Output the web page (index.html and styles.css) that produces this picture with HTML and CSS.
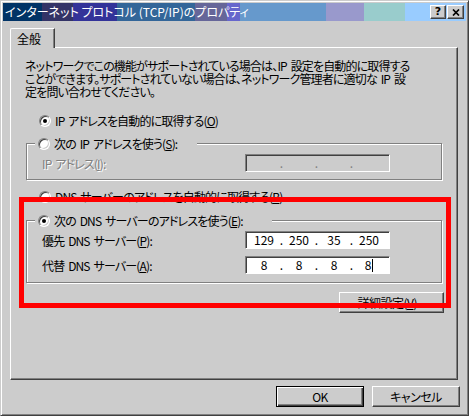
FILE: index.html
```html
<!DOCTYPE html>
<html lang="ja">
  <head>
    <meta charset="UTF-8" />
    <meta name="viewport" content="width=device-width, initial-scale=1.0" />
    <title>インターネット プロトコル (TCP/IP)のプロパティ</title>
    <link rel="stylesheet" href="styles.css">
  </head>
  <body>
    <div class="window">
      <div class="titlebar">
        <span class="title">インターネット プロトコル (TCP/IP)のプロパティ</span>
        <div class="title-buttons">
          <button class="tb-btn help">?</button>
          <button class="tb-btn close">
            <svg width="8" height="7" viewBox="0 0 8 7">
              <path d="M1 0.5 L7 6.5 M7 0.5 L1 6.5" stroke="#000" stroke-width="1.7" fill="none" />
            </svg>
          </button>
        </div>
      </div>
      <div class="dialog">
        <div class="tabs">
          <div class="tab active">全般</div>
        </div>
        <div class="panel">
          <p class="intro">ネットワークでこの機能がサポートされている場合は、IP 設定を自動的に取得する<br>ことができます。サポートされていない場合は、ネットワーク管理者に適切な IP 設<br>定を問い合わせてください。</p>

          <div class="radio-row first"><span class="radio checked"></span>IP アドレスを自動的に取得する(<u>O</u>)</div>

          <div class="group ip-group">
            <div class="group-title"><span class="radio"></span>次の IP アドレスを使う(<u>S</u>):</div>
            <div class="field-row">
              <span class="field-label disabled">IP アドレス(<u>I</u>):</span>
              <div class="ip-field disabled">
                <span class="octet"></span><span class="dot">.</span>
                <span class="octet"></span><span class="dot">.</span>
                <span class="octet"></span><span class="dot">.</span>
                <span class="octet"></span>
              </div>
            </div>
          </div>

          <div class="radio-row"><span class="radio"></span>DNS サーバーのアドレスを自動的に取得する(<u>B</u>)</div>

          <div class="group dns-group">
            <div class="group-title"><span class="radio checked"></span>次の DNS サーバーのアドレスを使う(<u>E</u>):</div>
            <div class="field-row">
              <span class="field-label">優先 DNS サーバー(<u>P</u>):</span>
              <div class="ip-field">
                <span class="octet">129</span><span class="dot">.</span>
                <span class="octet">250</span><span class="dot">.</span>
                <span class="octet">35</span><span class="dot">.</span>
                <span class="octet">250</span>
              </div>
            </div>
            <div class="field-row second">
              <span class="field-label">代替 DNS サーバー(<u>A</u>):</span>
              <div class="ip-field">
                <span class="octet">8</span><span class="dot">.</span>
                <span class="octet">8</span><span class="dot">.</span>
                <span class="octet">8</span><span class="dot">.</span>
                <span class="octet">8<span class="caret"></span></span>
              </div>
            </div>
          </div>

          <div class="panel-actions">
            <button class="btn detail">詳細設定(<u>V</u>)...</button>
          </div>
        </div>
        <div class="dialog-actions">
          <button class="btn default">OK</button>
          <button class="btn">キャンセル</button>
        </div>
      </div>
      <!-- red annotation frame -->
      <div class="highlight"></div>
    </div>
  </body>
</html>
```

FILE: styles.css
```css
body {
  margin: 0;
  background: #cccccc;
  font-family: "Noto Sans CJK JP", "Noto Sans", sans-serif;
  font-size: 12px;
  font-feature-settings: "palt";
  color: #000;
}

.window {
  position: relative;
  width: 469px;
  height: 416px;
  box-sizing: border-box;
  padding: 2px;
  background: #cccccc;
  border: 1px solid;
  border-color: #cccccc #404040 #404040 #cccccc;
  box-shadow: inset 1px 1px 0 #ffffff, inset -1px -1px 0 #808080;
}

.titlebar {
  display: flex;
  align-items: center;
  justify-content: space-between;
  height: 18px;
  padding: 0 2px;
  background: linear-gradient(
    to right,
    #003366 0 39px,
    #333366 39px 70px,
    #333399 70px 114px,
    #336699 114px 192px,
    #666699 192px 224px,
    #6666cc 224px 237px,
    #6699cc 237px 323px,
    #9999cc 323px 361px,
    #99cccc 361px 402px,
    #99ccff 402px
  );
}

.title {
  color: #ffffff;
  line-height: 18px;
  white-space: nowrap;
}

.title-buttons {
  display: flex;
  gap: 1px;
}

.tb-btn {
  display: flex;
  align-items: center;
  justify-content: center;
  width: 16px;
  height: 14px;
  padding: 0;
  background: #cccccc;
  border: 1px solid;
  border-color: #ffffff #404040 #404040 #ffffff;
  box-shadow: inset -1px -1px 0 #808080;
  font-family: "DejaVu Sans", sans-serif;
  font-weight: bold;
  font-size: 11px;
  line-height: 12px;
}

.tb-btn.close {
  width: 17px;
}

.dialog {
  padding: 7px 8px 0 7px;
}

.tabs {
  display: flex;
}

.tab {
  position: relative;
  z-index: 1;
  width: 45px;
  height: 20px;
  box-sizing: border-box;
  margin-bottom: -1px;
  padding: 2px 0 0 6px;
  background: #cccccc;
  border: 1px solid;
  border-bottom: none;
  border-color: #ffffff #404040 #cccccc #ffffff;
  border-top-left-radius: 2px;
  box-shadow: inset -1px 0 0 #808080;
  line-height: 15px;
}

.panel {
  height: 333px;
  box-sizing: border-box;
  padding: 11px 0 0 14px;
  border: 1px solid;
  border-color: #ffffff #404040 #404040 #ffffff;
  box-shadow: inset -1px -1px 0 #808080;
  letter-spacing: -0.85px;
  word-spacing: 2px;
}

.intro {
  margin: 0;
  line-height: 13px;
  white-space: nowrap;
}

.radio-row {
  display: flex;
  align-items: center;
  height: 13px;
  margin: 10px 0 0 14px;
  white-space: nowrap;
}

.radio-row.first {
  margin-top: 16px;
}

.radio {
  display: inline-grid;
  place-items: center;
  flex: none;
  width: 12px;
  height: 12px;
  box-sizing: border-box;
  margin-right: 4px;
  border-radius: 50%;
  background: #ffffff;
  border: 1px solid;
  border-color: #808080 #ffffff #ffffff #808080;
  box-shadow: inset 1px 1px 0 #404040, inset -1px -1px 0 #cccccc;
}

.radio.checked::after {
  content: "";
  width: 4px;
  height: 4px;
  border-radius: 50%;
  background: #000;
}

.group {
  width: 416px;
  box-sizing: border-box;
  margin: 16px 0 0 1px;
  padding: 0 0 7px 15px;
  border: 1px solid #808080;
  box-shadow: inset 1px 1px 0 #ffffff, 1px 1px 0 #ffffff;
}

.dns-group {
  margin-top: 17px;
  padding-bottom: 8px;
}

.group-title {
  display: flex;
  align-items: center;
  width: fit-content;
  height: 13px;
  margin: -7px 0 0 -7px;
  padding: 0 20px 0 3px;
  background: #cccccc;
  white-space: nowrap;
}

.dns-group .group-title {
  padding-right: 29px;
}

.field-row {
  display: flex;
  align-items: center;
  margin-top: 4px;
}

.field-row.second {
  margin-top: 7px;
}

.field-label {
  flex: 0 0 203px;
  white-space: nowrap;
}

.field-label.disabled {
  color: #808080;
  text-shadow: 1px 1px 0 #ffffff;
}

.ip-field {
  display: flex;
  align-items: center;
  width: 145px;
  height: 18px;
  box-sizing: border-box;
  padding-left: 4px;
  background: #ffffff;
  border: 1px solid;
  border-color: #808080 #ffffff #ffffff #808080;
  box-shadow: inset 1px 1px 0 #404040;
  line-height: 16px;
  letter-spacing: 0;
  word-spacing: 0;
}

.ip-field.disabled {
  background: #cccccc;
  color: #808080;
}

.octet {
  width: 28px;
  text-align: center;
}

.dot {
  width: 7px;
  text-align: center;
}

.caret {
  display: inline-block;
  width: 1px;
  height: 13px;
  margin-left: 1px;
  background: #000;
  vertical-align: -2px;
}

.panel-actions {
  display: flex;
  justify-content: flex-end;
  width: 418px;
  margin: 9px 0 0 1px;
}

.btn {
  height: 21px;
  padding: 0;
  background: #cccccc;
  border: 1px solid;
  border-color: #ffffff #404040 #404040 #ffffff;
  box-shadow: inset -1px -1px 0 #808080;
  font-family: inherit;
  font-size: 12px;
  font-feature-settings: "palt";
  letter-spacing: -0.5px;
  color: #000;
}

.btn.detail {
  width: 105px;
}

.btn.default {
  border-color: #000;
  box-shadow: inset 1px 1px 0 #ffffff, inset -1px -1px 0 #404040, inset -2px -2px 0 #808080;
}

.dialog-actions {
  display: flex;
  justify-content: flex-end;
  gap: 8px;
  margin: 6px -2px 0 0;
}

.dialog-actions .btn {
  width: 88px;
}

.highlight {
  position: absolute;
  left: 18px;
  top: 196px;
  width: 432px;
  height: 111px;
  box-sizing: border-box;
  border: 5px solid #ff0000;
  pointer-events: none;
}
```
